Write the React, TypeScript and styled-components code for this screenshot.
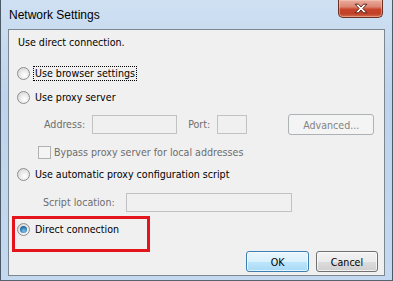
import React from 'react';
import styled, { createGlobalStyle } from 'styled-components';

const GlobalStyle = createGlobalStyle`
  html, body {
    margin: 0;
    padding: 0;
    background: #bcd2ea;
  }
  * { box-sizing: border-box; }
`;

const uiFont = `"DejaVu Sans Condensed", "DejaVu Sans", sans-serif`;

const App: React.FC = () => {
  return (
    <>
      <GlobalStyle />
      <Frame>
        <TitleBar>
          <Title>Network Settings</Title>
          <CloseButton aria-label="Close">
            <svg width="14" height="11" viewBox="0 0 13 10">
              <path
                d="M1 1 H4.2 L6.5 3.6 L8.8 1 H12 L8.2 5 L12 9 H8.8 L6.5 6.4 L4.2 9 H1 L4.8 5 Z"
                fill="#ffffff"
                stroke="#5a2216"
                strokeWidth="0.9"
                strokeLinejoin="round"
              />
            </svg>
          </CloseButton>
        </TitleBar>

        <Client>
          <Row $top={2} $height={20}>
            <Text>Use direct connection.</Text>
          </Row>

          <Row $top={11}>
            <Radio />
            <FocusText>Use browser settings</FocusText>
          </Row>

          <Row $top={4}>
            <Radio />
            <Text>Use proxy server</Text>
          </Row>

          <Row $top={7} $height={21} $indent={26}>
            <Text $disabled>Address:</Text>
            <Field $width={85} $gap={7} />
            <Text $disabled $gap={11}>Port:</Text>
            <Field $width={30} $gap={7} />
            <DisabledButton $gap={41}>Advanced...</DisabledButton>
          </Row>

          <Row $top={8} $height={18} $indent={20}>
            <Checkbox />
            <Text $disabled $gap={3}>Bypass proxy server for local addresses</Text>
          </Row>

          <Row $top={3}>
            <Radio />
            <Text>Use automatic proxy configuration script</Text>
          </Row>

          <Row $top={8} $indent={25}>
            <Text $disabled>Script location:</Text>
            <Field $width={166} $gap={11} />
          </Row>

          <Row $top={7}>
            <Radio $checked />
            <Text>Direct connection</Text>
          </Row>

          <ButtonRow>
            <DialogButton $default>OK</DialogButton>
            <DialogButton>Cancel</DialogButton>
          </ButtonRow>

          <Highlight />
        </Client>
      </Frame>
    </>
  );
};

export default App;

const Frame = styled.div`
  width: 393px;
  height: 281px;
  padding: 0 7px 4px 7px;
  display: flex;
  flex-direction: column;
  background: linear-gradient(180deg, #cfe0f2 0%, #bdd4ec 35%, #c4d9ef 100%);
  border-left: 1px solid #4c5967;
  border-right: 1px solid #4c5967;
  border-bottom: 1px solid #56636f;
`;

const TitleBar = styled.div`
  height: 29px;
  display: flex;
  align-items: flex-start;
`;

const Title = styled.div`
  font-family: "Liberation Sans", Arial, sans-serif;
  font-size: 12px;
  color: #000;
  padding: 8px 0 0 1px;
  line-height: 14px;
`;

const CloseButton = styled.div`
  margin-left: auto;
  margin-right: 2px;
  width: 45px;
  height: 18px;
  display: flex;
  align-items: center;
  justify-content: center;
  border: 1px solid #6b3023;
  border-top: none;
  border-radius: 0 0 5px 5px;
  background: linear-gradient(180deg, #e9ad9f 0%, #dc8672 40%, #c8442b 55%, #c0402a 80%, #d66a4d 100%);
  box-shadow: inset 0 0 0 1px rgba(255, 210, 195, 0.45);
`;

const Client = styled.div`
  position: relative;
  flex: 1;
  background: #f0f0f0;
  border: 1px solid #7d8791;
  padding: 0 6px 0 9px;
  display: flex;
  flex-direction: column;
  font-family: ${uiFont};
  font-size: 10.6px;
  color: #000;
`;

const Row = styled.div<{ $top: number; $height?: number; $indent?: number }>`
  display: flex;
  align-items: center;
  height: ${p => p.$height ?? 20}px;
  margin-top: ${p => p.$top}px;
  padding-left: ${p => p.$indent ?? 0}px;
`;

const Text = styled.span<{ $disabled?: boolean; $gap?: number }>`
  color: ${p => (p.$disabled ? '#6d6d6d' : '#000')};
  margin-left: ${p => p.$gap ?? 0}px;
  white-space: nowrap;
  line-height: 13px;
`;

const FocusText = styled.span`
  white-space: nowrap;
  line-height: 13px;
  padding: 0 1px;
  margin-left: -1px;
  outline: 1px dotted #000;
  outline-offset: 0;
`;

const Radio = styled.span<{ $checked?: boolean }>`
  position: relative;
  width: 13px;
  height: 13px;
  margin: 0 5px 0 -1px;
  border-radius: 50%;
  border: 1px solid #8d8f92;
  background: radial-gradient(circle at 60% 65%, #ffffff 0%, #e6e6e6 55%, #c9cacb 100%);
  flex-shrink: 0;

  &::after {
    content: '';
    display: ${p => (p.$checked ? 'block' : 'none')};
    position: absolute;
    left: 2px;
    top: 2px;
    width: 7px;
    height: 7px;
    border-radius: 50%;
    background: radial-gradient(circle at 55% 70%, #7ec4ee 0%, #2d79b0 55%, #0f3f66 100%);
  }
`;

const Checkbox = styled.span`
  width: 13px;
  height: 13px;
  border: 1px solid #b1b1b1;
  background: #f4f4f4;
  flex-shrink: 0;
`;

const Field = styled.span<{ $width: number; $gap: number }>`
  width: ${p => p.$width}px;
  height: 19px;
  margin-left: ${p => p.$gap}px;
  border: 1px solid #c2c2c2;
  background: #f0f0f0;
  flex-shrink: 0;
`;

const DisabledButton = styled.span<{ $gap: number }>`
  width: 86px;
  height: 21px;
  margin-left: ${p => p.$gap}px;
  display: flex;
  align-items: center;
  justify-content: center;
  border: 1px solid #adb2b5;
  border-radius: 3px;
  background: #f4f4f4;
  color: #838383;
`;

const ButtonRow = styled.div`
  display: flex;
  justify-content: flex-end;
  gap: 7px;
  margin-top: 12px;
`;

const DialogButton = styled.span<{ $default?: boolean }>`
  width: ${p => (p.$default ? 63 : 62)}px;
  height: 21px;
  display: flex;
  align-items: center;
  justify-content: center;
  border-radius: 3px;
  border: 1px solid ${p => (p.$default ? '#3c7fb1' : '#707070')};
  background: ${p =>
    p.$default
      ? 'linear-gradient(180deg, #eaf6fd 0%, #d9f0fc 50%, #bee6fd 51%, #a7d9f5 100%)'
      : 'linear-gradient(180deg, #f2f2f2 0%, #ebebeb 50%, #dddddd 51%, #cfcfcf 100%)'};
  box-shadow: inset 0 0 0 1px rgba(255, 255, 255, 0.7);
`;

const Highlight = styled.div`
  position: absolute;
  left: 3px;
  top: 186px;
  width: 138px;
  height: 36px;
  border: 3px solid #e3141b;
  pointer-events: none;
`;
